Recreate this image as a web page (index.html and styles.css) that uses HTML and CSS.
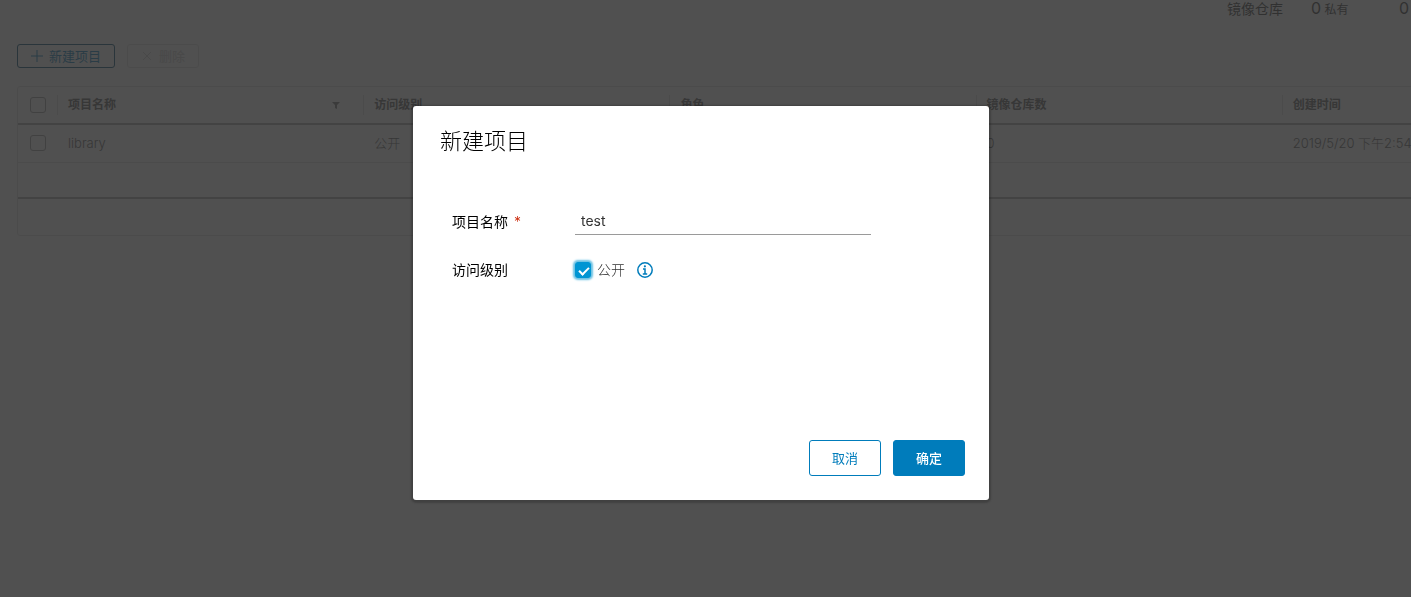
FILE: index.html
```html
<!DOCTYPE html>
<html lang="zh-CN">
	<head>
		<meta charset="UTF-8" />
		<title>新建项目</title>
		<link rel="stylesheet" href="styles.css">
	</head>
	<body>
		<main class="projects">
			<div class="summary">
				<span class="summary-title">镜像仓库</span>
				<span class="stat"><span class="stat-value">0</span> 私有</span>
				<span class="stat"><span class="stat-value">0</span></span>
			</div>

			<div class="toolbar">
				<button type="button" class="btn btn-sm">
					<svg class="btn-icon" viewBox="0 0 12 12"><path d="M6 0v12M0 6h12" /></svg>
					新建项目
				</button>
				<button type="button" class="btn btn-sm" disabled>
					<svg class="btn-icon" viewBox="0 0 12 12"><path d="M2 2l8 8M10 2l-8 8" /></svg>
					删除
				</button>
			</div>

			<div class="datagrid">
				<table>
					<thead>
						<tr>
							<th class="col-select"><input type="checkbox" class="checkbox" aria-label="全选" /></th>
							<th>
								<div class="column-title">
									项目名称
									<svg class="filter-icon" viewBox="0 0 8 8"><path d="M0 1h8L5 4v4L3 7V4z" /></svg>
								</div>
							</th>
							<th>访问级别</th>
							<th>角色</th>
							<th>镜像仓库数</th>
							<th>创建时间</th>
						</tr>
					</thead>
					<tbody>
						<tr>
							<td class="col-select"><input type="checkbox" class="checkbox" aria-label="library" /></td>
							<td><a href="#">library</a></td>
							<td>公开</td>
							<td></td>
							<td>0</td>
							<td>2019/5/20 下午2:54</td>
						</tr>
					</tbody>
				</table>
				<div class="datagrid-space"></div>
				<div class="datagrid-footer"></div>
			</div>
		</main>

		<div class="backdrop">
			<form class="modal" role="dialog" aria-labelledby="modal-title">
				<h3 class="modal-title" id="modal-title">新建项目</h3>

				<div class="modal-body">
					<div class="form-row">
						<label class="form-label required" for="project-name">项目名称</label>
						<input type="text" class="text-input" id="project-name" value="test" />
					</div>
					<div class="form-row">
						<span class="form-label">访问级别</span>
						<div class="access">
							<input type="checkbox" class="checkbox focused" id="project-public" checked />
							<label class="access-label" for="project-public">公开</label>
							<svg class="info-icon" viewBox="0 0 16 16">
								<circle cx="8" cy="8" r="7.2" />
								<path d="M6 7h2v5M5.8 12h4.4" />
								<circle class="dot" cx="7.9" cy="4.3" r="1.1" />
							</svg>
						</div>
					</div>
				</div>

				<div class="modal-footer">
					<button type="button" class="btn">取消</button>
					<button type="submit" class="btn btn-primary">确定</button>
				</div>
			</form>
		</div>
	</body>
</html>
```

FILE: styles.css
```css
* {
	box-sizing: border-box;
}

body {
	margin: 0;
	height: 100vh;
	overflow: hidden;
	background: #fafafa;
	color: #565656;
	font: 14px/24px Inter, "Noto Sans CJK SC", sans-serif;
}

button,
input {
	font: inherit;
	margin: 0;
}

/* Project list */
.projects {
	width: max-content;
	padding: 0 16px;
}

.summary {
	display: flex;
	justify-content: flex-end;
	gap: 28px;
	height: 44px;
	padding-right: 180px;
	color: #313131;
	line-height: 16px;
}

.summary-title {
	padding-top: 1px;
}

.stat {
	width: 60px;
	font-size: 12px;
}

.stat-value {
	font-size: 16px;
}

.stat:last-child {
	width: 10px;
}

.toolbar {
	display: flex;
	gap: 12px;
	margin-bottom: 18px;
	padding-left: 1px;
}

.btn {
	display: inline-flex;
	align-items: center;
	justify-content: center;
	min-width: 72px;
	height: 36px;
	padding: 0 12px;
	border: 1px solid #007cbb;
	border-radius: 3px;
	background: transparent;
	color: #007cbb;
	font-size: 13px;
}

.btn-sm {
	gap: 6px;
	height: 24px;
	padding: 0 13px;
	border-color: #004a70;
}

.btn:disabled {
	border-color: #ddd;
	color: #ccc;
}

.btn-primary {
	background: #007cbb;
	color: #fff;
	font-weight: 500;
}

.btn-icon {
	width: 12px;
	height: 12px;
	fill: none;
	stroke: currentColor;
}

.datagrid {
	margin-left: 1px;
	border: 1px solid #ddd;
	border-radius: 3px;
	background: #fafafa;
}

.datagrid table {
	border-spacing: 0;
	table-layout: fixed;
	width: 1570px;
}

.datagrid th,
.datagrid td {
	height: 38px;
	padding: 0 11px 2px;
	border-bottom: 1px solid #ddd;
	text-align: left;
	font-size: 13px;
	font-weight: 300;
}

.datagrid th {
	padding-bottom: 0;
	border-bottom: 2px solid #aaa;
	background: linear-gradient(#ddd, #ddd) no-repeat 0 50% / 1px 20px;
	font-size: 12px;
	font-weight: 700;
	line-height: 20px;
}

.datagrid th:first-child {
	background: none;
}

.datagrid .col-select {
	width: 39px;
	padding-left: 12px;
}

.datagrid a {
	color: inherit;
	text-decoration: none;
}

.column-title {
	display: flex;
	align-items: center;
	justify-content: space-between;
	padding-right: 12px;
}

.filter-icon {
	width: 8px;
	height: 8px;
	fill: #747474;
}

.datagrid-space {
	height: 36px;
	border-bottom: 2px solid #aaa;
}

.datagrid-footer {
	height: 36px;
}

.checkbox {
	display: block;
	appearance: none;
	width: 16px;
	height: 16px;
	border: 1px solid #9a9a9a;
	border-radius: 3px;
}

.checkbox:checked {
	border-color: #0095d3;
	background: #0095d3;
}

.checkbox:checked::before {
	content: "";
	display: block;
	width: 8px;
	height: 4px;
	margin: 4px 3px;
	border: solid #fff;
	border-width: 0 0 2px 2px;
	transform: rotate(-45deg);
}

.checkbox.focused {
	box-shadow: 0 0 2px 2px #6bc1e3;
}

/* Dialog */
.backdrop {
	position: fixed;
	inset: 0;
	display: flex;
	align-items: center;
	justify-content: center;
	padding: 9px 9px 0 0;
	background: rgba(49, 49, 49, 0.85);
}

.modal {
	width: 576px;
	padding: 24px;
	border-radius: 3px;
	background: #fff;
	box-shadow: 0 1px 2px 2px rgba(0, 0, 0, 0.2);
}

.modal-title {
	margin: 0;
	padding-left: 3px;
	color: #000;
	font-size: 22px;
	font-weight: 300;
	line-height: 22px;
}

.modal-body {
	display: flex;
	flex-direction: column;
	gap: 23px;
	min-height: 288px;
	padding: 57px 15px 0;
}

.form-row {
	display: flex;
	align-items: center;
}

.form-label {
	width: 123px;
	color: #000;
}

.required::after {
	content: "*";
	margin-left: 6px;
	color: #c92100;
	font-weight: 300;
}

.text-input {
	width: 296px;
	height: 26px;
	padding: 0 6px 2px;
	border: 0;
	border-bottom: 1px solid #9a9a9a;
	outline: 0;
	background: transparent;
	color: #333;
}

.access {
	display: flex;
	align-items: center;
}

.access-label {
	margin: 0 12px 0 6px;
	font-weight: 300;
	color: #313131;
}

.info-icon {
	width: 16px;
	height: 16px;
	fill: none;
	stroke: #007cbb;
	stroke-width: 1.5;
}

.info-icon .dot {
	fill: #007cbb;
	stroke: none;
}

.modal-footer {
	display: flex;
	justify-content: flex-end;
	gap: 12px;
}
```
